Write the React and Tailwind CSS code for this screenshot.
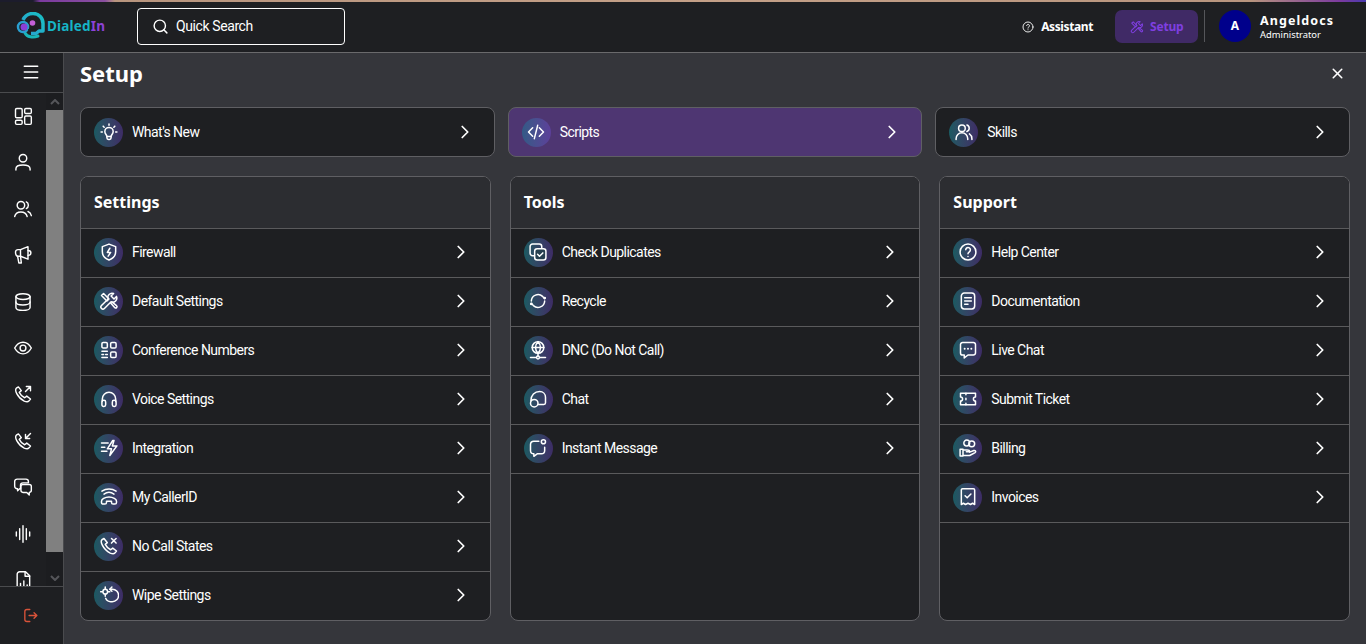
import React from "react";
import { ChevronRight, X, Search, Menu } from "lucide-react";

const Svg = ({ size = 20, sw = 1.8, color = "currentColor", children, className = "" }) => (
  <svg width={size} height={size} viewBox="0 0 24 24" fill="none" stroke={color} strokeWidth={sw} strokeLinecap="round" strokeLinejoin="round" className={className}>
    {children}
  </svg>
);

const P = {
  bulb: <><path d="M9.500 17.500h5v1.500a2 2 0 0 1-2 2h-1a2 2 0 0 1-2-2v-1.500Z"/><path d="M9.500 17.500c0-2.200-2.500-3-2.500-6a5 5 0 0 1 10 0c0 3-2.500 3.800-2.500 6"/><path d="M12 2.500v1.500M5 5l1.200 1.200M19 5l-1.200 1.200M2.500 12H4M20 12h1.500"/></>,
  code: <><path d="m8 7-5 5 5 5M16 7l5 5-5 5M14 4l-4 16"/></>,
  users: <><circle cx="9.500" cy="7.500" r="4"/><path d="M2.500 21v-1a7 7 0 0 1 14 0v1"/><path d="M15.500 3.700a4 4 0 0 1 0 7.600M18.500 14.200a7 7 0 0 1 3 5.800v1"/></>,
  shield: <><path d="M12 2.500 20 5.500v6c0 5-3.400 8.400-8 10-4.600-1.600-8-5-8-10v-6l8-3Z"/><path d="m13 7.500-3 5h4l-3 4.500"/></>,
  tools: <><path d="M3 5.500 5.500 3 12 9.500 9.500 12 3 5.500Z"/><path d="M21 6.500a5 5 0 0 1-6.500 6.500L6.500 21a2.100 2.100 0 0 1-3.500-3.500L11 9.500A5 5 0 0 1 17.500 3L14.500 6l3.500 3.500 3-3Z"/><path d="m14 14.500 5 5.500a1.500 1.500 0 0 0 2-2.500L15.500 13"/></>,
  qr: <><rect x="3.500" y="3" width="6.500" height="6.500" rx="1.500"/><rect x="14" y="3" width="6.500" height="6.500" rx="1.500"/><rect x="14" y="14.500" width="6.500" height="6.500" rx="1.500"/><path d="M3.500 13.500h6.500M3.500 17.500h2M8 17.500h2M3.500 21h6.500"/></>,
  head: <><path d="M4 15v-3a8 8 0 0 1 16 0v3"/><rect x="3.500" y="13.500" width="4.500" height="7.500" rx="2"/><rect x="16" y="13.500" width="4.500" height="7.500" rx="2"/></>,
  integ: <><path d="M16.500 3 10 13h5l-2 8 8.500-11.500h-5.500L18 3h-1.500Z"/><path d="M3 6h8M3 11h4M3 16h6.500"/></>,
  caller: <><path d="M3 18.500v-1.500c0-2 4-5 9-5s9 3 9 5v1.500a2 2 0 0 1-2 2h-2a2 2 0 0 1-2-2v-1.500H9v1.500a2 2 0 0 1-2 2H5a2 2 0 0 1-2-2Z"/><path d="M6 8.500c3.500-2.500 8.500-2.500 12 0M3.500 5C8.500 1.500 15.500 1.500 20.500 5"/></>,
  nocall: <><path d="M6 3 3.500 4.500C2.500 5.500 2.500 8 4 11c2 4 5.500 7.500 9.500 9.500 2.500 1 4.500 1 5.500 0l2-2.500-4.500-3.500-2.500 2c-2.500-1-5-3.500-6.500-6.500L10 8 6 3Z"/><path d="m15 3 5.500 5.500M20.500 3 15 8.500"/></>,
  wipe: <><circle cx="7.500" cy="8" r="2.800"/><path d="M7.500 2.500v2M7.500 11.500v2M2 8h2M11 8h2"/><path d="M15.500 2.500 13 5l2.500 2.500"/><path d="M13 5h3a6.500 6.500 0 0 1 0 15h-2c-3 0-5-1.500-6-4"/></>,
  dup: <><rect x="2.500" y="2.500" width="14" height="14" rx="3"/><rect x="8" y="8" width="13.500" height="13.500" rx="3" fill="#27404f"/><path d="m11.500 14.800 2.300 2.300 4-4"/></>,
  recycle: <><path d="M4 12a8 8 0 0 1 13.500-5.500L20 9"/><path d="M20 12a8 8 0 0 1-13.500 5.500L4 15"/><circle cx="20" cy="8.500" r=".8"/><circle cx="4" cy="15.500" r=".8"/></>,
  dnc: <><circle cx="12" cy="9" r="7"/><path d="M5 9h14M12 2c2 2 3 4.500 3 7s-1 5-3 7c-2-2-3-4.500-3-7s1-5 3-7Z"/><path d="M12 16v3M3 21h7M14 21h7"/><circle cx="12" cy="21" r="1.700"/></>,
  chat: <><path d="M3.500 14C3.500 7.500 8 3 14 3c4 0 7 3 7 7v6.500a2 2 0 0 1-2 2h-7"/><circle cx="7.500" cy="17" r="4.500"/></>,
  im: <><path d="M13 4H7a4 4 0 0 0-4 4v7a4 4 0 0 0 4 4h0v3l4-3h5a4 4 0 0 0 4-4v-4"/><circle cx="18.500" cy="4.500" r="2.500"/></>,
  help: <><circle cx="12" cy="12" r="9.500"/><path d="M9.300 9.200a2.800 2.800 0 1 1 4.300 2.600c-1 .7-1.600 1.200-1.600 2.400"/><path d="M12 17.300v.1"/></>,
  doc: <><rect x="4" y="2.500" width="16" height="19" rx="3.500"/><path d="M8 8h8M8 12h8M8 16h4"/></>,
  live: <><path d="M5.500 3h13A2.500 2.500 0 0 1 21 5.500v10a2.500 2.500 0 0 1-2.500 2.500H12l-4.500 3.500V18h-2A2.500 2.500 0 0 1 3 15.500v-10A2.500 2.500 0 0 1 5.500 3Z"/><path d="M8 10.500v.1M12 10.500v.1M16 10.500v.1" strokeWidth="2.400"/></>,
  ticket: <><path d="M3 5h18v4.500a2.500 2.500 0 0 0 0 5V19H3v-4.500a2.500 2.500 0 0 0 0-5V5Z"/><path d="M9.500 5v2M9.500 11v2M9.500 17v2"/></>,
  billing: <><circle cx="10.500" cy="6" r="3.500"/><circle cx="16.500" cy="7" r="3.500"/><path d="M2.500 13.500H6v8H2.500zM6 14.500h5c2 0 3 1 3 2h-4M14 17l5-2c2-.5 3 1.500 1.500 2.500L14 21H6"/></>,
  invoice: <><path d="M4 3.500A1.500 1.500 0 0 1 5.500 2h13A1.500 1.500 0 0 1 20 3.500V21l-2.500-1.500L15 21l-3-1.500L9 21l-2.500-1.500L4 21V3.500Z"/><path d="m8.500 10.500 2.500 2.500 4.500-4.500"/></>,
  dash: <><rect x="3" y="3" width="8" height="11" rx="1.500"/><rect x="14" y="3" width="8" height="6" rx="1.500"/><rect x="3" y="17" width="8" height="5" rx="1.500"/><rect x="14" y="12" width="8" height="10" rx="1.500"/></>,
  user: <><circle cx="12" cy="7.500" r="4.500"/><path d="M3.500 21.500v-1.500c0-3 3-4.500 8.500-4.500s8.500 1.500 8.500 4.500v1.500"/></>,
  team: <><circle cx="9.500" cy="7.500" r="4.500"/><path d="M2 21c.8-3.500 3.800-5.500 7.500-5.500S16 17.500 17 21"/><path d="M16 3.500a4.500 4.500 0 0 1 0 8M18 15c2 .8 3.500 2.800 4 5"/></>,
  mega: <><path d="M3 8.500C3 6.500 4.500 5.500 6 5.500h3l9-3.500v15l-9-3.500H6c-2 0-3-2-3-5Z"/><path d="M9 5.500v8M5.500 13.500 7 21.500h3l-1-8"/><path d="M18 6.500c2 0 3.500 1 3.500 3s-1.500 3-3.500 3"/></>,
  db: <><ellipse cx="12" cy="5.500" rx="8.500" ry="3.500"/><path d="M3.500 5.500v13c0 2 3.800 3.500 8.500 3.500s8.500-1.500 8.500-3.500v-13"/><path d="M3.500 12c0 2 3.800 3.500 8.500 3.500s8.500-1.500 8.500-3.500"/></>,
  eye: <><path d="M2 12c2.500-4.500 6-7 10-7s7.500 2.500 10 7c-2.500 4.500-6 7-10 7s-7.500-2.500-10-7Z"/><circle cx="12" cy="12" r="3.500"/></>,
  out: <><path d="M6.500 3.500 4 5c-1 1-1 3.500.5 6.500 2 4 5 7 9 9 2.500 1 4.500 1 5.500 0l2-2.500-4.500-3.500-2.500 2c-2.500-1-5-3.500-6.500-6.500L10 8 6.500 3.500Z"/><path d="M15 9l6-6M16 3h5v5"/></>,
  inc: <><path d="M6.500 3.500 4 5c-1 1-1 3.500.5 6.500 2 4 5 7 9 9 2.500 1 4.500 1 5.500 0l2-2.500-4.500-3.500-2.500 2c-2.500-1-5-3.500-6.500-6.500L10 8 6.500 3.500Z"/><path d="M21 3l-6 6M15 4v5h5"/></>,
  msgs: <><path d="M5 2.500h10.500a3 3 0 0 1 3 3V7H12a3 3 0 0 0-3 3v4H8l-2.500 2.500V14H5a3 3 0 0 1-3-3V5.500a3 3 0 0 1 3-3Z"/><path d="M12 9h7.500a2.500 2.500 0 0 1 2.500 2.500V16a2.500 2.500 0 0 1-2.500 2.500V21.500L16.500 18.500H12A2.500 2.500 0 0 1 9.500 16v-4.500A2.500 2.500 0 0 1 12 9Z"/></>,
  wave: <><path d="M12 2v20M8 5.500v13M16 5.500v13M4 9.500v5M20 9.500v5"/></>,
  report: <><path d="M5 22V5a3 3 0 0 1 3-3h7l5 5v15"/><path d="M14.500 2.500V7.500h5.500"/><path d="M9 22v-6M13 22v-9M17 22v-4"/></>,
  logout: <><path d="M11 3.500H7a3 3 0 0 0-3 3v11a3 3 0 0 0 3 3h4"/><path d="M10 12h11M17 8l4 4-4 4"/></>,
  helpSm: <><circle cx="12" cy="12" r="10"/><path d="M9.300 9.200a2.800 2.800 0 1 1 4.300 2.600c-1 .7-1.600 1.200-1.600 2.400"/><path d="M12 17.500v.1"/></>,
  setupTool: <><path d="M3 5.500 5.500 3 12 9.500 9.500 12 3 5.500Z"/><path d="M21 6.500a5 5 0 0 1-6.500 6.500L6.500 21a2.100 2.100 0 0 1-3.500-3.500L11 9.500A5 5 0 0 1 17.500 3L14.500 6l3.500 3.500 3-3Z"/><path d="m14 14.500 5 5.500a1.500 1.500 0 0 0 2-2.500L15.500 13"/></>,
};

const Badge = ({ icon, active }) => (
  <span className={active
    ? "flex h-[29px] w-[29px] shrink-0 items-center justify-center rounded-full bg-gradient-to-r from-[#315a86] to-[#5c3f9a] text-white"
    : "flex h-[29px] w-[29px] shrink-0 items-center justify-center rounded-full bg-gradient-to-r from-[#1a5a62] to-[#3d2c66] text-white"}>
    <Svg size={20} sw={1.8}>{P[icon]}</Svg>
  </span>
);

const TopCard = ({ icon, label, active }) => (
  <div className={active
    ? "flex h-[50px] items-center rounded-lg border border-[#5f5f63] bg-[#4e3672] pl-[13px] pr-[18px]"
    : "flex h-[50px] items-center rounded-lg border border-[#5f5f63] bg-[#1e1f22] pl-[13px] pr-[18px]"}>
    <Badge icon={icon} active={active} />
    <span className="ml-[9px] flex-1 text-sm tracking-[-0.55px] text-white">{label}</span>
    <ChevronRight size={22} strokeWidth={1.9} className="text-white" />
  </div>
);

const Row = ({ icon, label }) => (
  <div className="flex h-[49px] shrink-0 items-center border-b border-[#5a5a5c] pb-[2px] pl-[13px] pr-[18px]">
    <Badge icon={icon} />
    <span className="ml-[9px] flex-1 text-sm tracking-[-0.55px] text-white">{label}</span>
    <ChevronRight size={22} strokeWidth={1.9} className="text-white" />
  </div>
);

const Panel = ({ title, rows }) => (
  <section className="flex h-[445px] flex-col overflow-hidden rounded-lg border border-[#5f5f63] bg-[#1e1f22]">
    <h2 className="flex h-[52px] shrink-0 items-center border-b border-[#5a5a5c] bg-[#2c2d31] pb-[2px] pl-[13px] font-['Noto_Sans',sans-serif] text-[16px] font-bold text-white">{title}</h2>
    {rows.map(([i, l]) => <Row key={l} icon={i} label={l} />)}
  </section>
);

const rail = ["dash", "user", "team", "mega", "db", "eye", "out", "inc", "msgs", "wave", "report"];

const settings = [["shield", "Firewall"], ["tools", "Default Settings"], ["qr", "Conference Numbers"], ["head", "Voice Settings"], ["integ", "Integration"], ["caller", "My CallerID"], ["nocall", "No Call States"], ["wipe", "Wipe Settings"]];
const tools = [["dup", "Check Duplicates"], ["recycle", "Recycle"], ["dnc", "DNC (Do Not Call)"], ["chat", "Chat"], ["im", "Instant Message"]];
const support = [["help", "Help Center"], ["doc", "Documentation"], ["live", "Live Chat"], ["ticket", "Submit Ticket"], ["billing", "Billing"], ["invoice", "Invoices"]];

const Logo = () => (
  <svg width="30" height="28" viewBox="0 0 30 28" fill="none" className="shrink-0">
    <defs>
      <linearGradient id="lg" x1="0" y1="1" x2="1" y2="0">
        <stop offset="0" stopColor="#2a9fd0" />
        <stop offset="1" stopColor="#19c0c4" />
      </linearGradient>
    </defs>
    <path d="M7 8C9 3.500 13 1.500 17 1.500c6 0 10 4.500 10 10v7.500h-4l-3 2.500h-5" stroke="url(#lg)" strokeWidth="3.500" strokeLinejoin="round" />
    <path d="M9 21c2 4 8 5 13 3" stroke="#18b6b8" strokeWidth="3" strokeLinecap="round" />
    <circle cx="7" cy="15" r="5" fill="#1e1f22" stroke="#2a9fd0" strokeWidth="2.500" />
    <circle cx="8" cy="15" r="3.500" fill="#8b3fd6" />
    <circle cx="16.500" cy="11" r="2.800" fill="#c560d8" />
    <path d="M12 18c2-2.500 6-2.500 8 0" stroke="#1e1f22" strokeWidth="1" />
  </svg>
);

export default function App() {
  return (
    <div className="flex h-screen w-full flex-col overflow-hidden bg-[#35363b] font-['Roboto',sans-serif] text-white">
      <div className="h-[2px] shrink-0 bg-[linear-gradient(90deg,#1c1c2c_0,#1c1c2c_33px,#7b3a9f_40px,#8a4fa0_105px,#b8957e_115px,#c4a088_700px,#b8957e_1250px,#7b3a9f_1340px,#4a3ab0_1366px)]" />
      <header className="flex h-[51px] shrink-0 items-center border-b border-[#6a6a6c] bg-[#1e1f22] pb-[2px]">
        <div className="ml-[16px] flex w-[121px] items-center">
          <Logo />
          <span className="ml-[1px] font-['Noto_Sans',sans-serif] text-[13.500px] font-bold tracking-[0.2px] text-[#16b3c6]">Dialed<span className="text-[#8d42d8]">In</span></span>
        </div>
        <div className="flex h-[37px] w-[208px] items-center rounded-[4px] border border-white pl-[14px]">
          <Search size={17} strokeWidth={2} />
          <span className="ml-[7px] text-sm tracking-[-0.4px]">Quick Search</span>
        </div>
        <div className="ml-auto flex items-center">
          <Svg size={12} sw={1.8} className="mt-[2px]">{P.helpSm}</Svg>
          <span className="ml-[7px] pt-[2px] font-['Noto_Sans',sans-serif] text-[12px] font-bold tracking-[-0.4px]">Assistant</span>
          <div className="ml-[22px] flex h-[33px] w-[83px] items-center rounded-[7px] bg-[#402a66] pl-[15px] pt-[2px] text-[#7f3fe0]">
            <Svg size={14} sw={1.8}>{P.setupTool}</Svg>
            <span className="ml-[6px] font-['Noto_Sans',sans-serif] text-[12px] font-bold tracking-[-0.2px]">Setup</span>
          </div>
          <div className="ml-[6px] h-[32px] w-px bg-[#55565a]" />
          <div className="ml-[14px] flex h-[32px] w-[32px] items-center justify-center rounded-full bg-[#00008b] font-['Noto_Sans',sans-serif] text-[12px] font-bold">A</div>
          <div className="ml-[9px] mr-[31px] w-[75px] pt-[2px]">
            <div className="font-['Noto_Sans',sans-serif] text-[12.500px] font-bold leading-[16px] tracking-[1.100px]">Angeldocs</div>
            <div className="font-['Noto_Sans',sans-serif] text-[9.400px] leading-[12px]">Administrator</div>
          </div>
        </div>
      </header>

      <div className="flex min-h-0 flex-1">
        <aside className="flex w-[64px] shrink-0 flex-col border-r border-[#4a4b4e] bg-[#1e1f22]">
          <div className="flex h-[40px] shrink-0 items-center justify-center border-b border-[#4a4b4e] pb-[2px] pr-[1px]">
            <Menu size={20} strokeWidth={1.8} />
          </div>
          <div className="flex min-h-0 flex-1">
            <div className="flex-1 overflow-hidden">
              <div className="flex flex-col items-center pt-[12px]">
                {rail.map((r) => (
                  <span key={r} className="flex h-[46.400px] shrink-0 items-start justify-center pt-px">
                    <Svg size={20} sw={1.7}>{P[r]}</Svg>
                  </span>
                ))}
              </div>
            </div>
            <div className="flex w-[17px] shrink-0 flex-col bg-[#808080]">
              <div className="flex h-[17px] items-center justify-center bg-[#1c1d20]">
                <svg width="10" height="6" viewBox="0 0 10 6"><path d="M1 5l4-4 4 4" fill="none" stroke="#55565a" strokeWidth="2" /></svg>
              </div>
              <div className="flex-1" />
              <div className="flex h-[34px] items-end justify-center bg-[#1c1d20] pb-[5px]">
                <svg width="10" height="6" viewBox="0 0 10 6"><path d="M1 1l4 4 4-4" fill="none" stroke="#55565a" strokeWidth="2" /></svg>
              </div>
            </div>
          </div>
          <div className="flex h-[58px] shrink-0 items-center justify-center border-t border-[#4a4b4e] pr-[3px] text-[#d9533a]">
            <Svg size={17} sw={1.9}>{P.logout}</Svg>
          </div>
        </aside>

        <main className="min-w-0 flex-1 px-[16px]">
          <div className="flex h-[54px] items-center justify-between pb-[13px]">
            <h1 className="font-['Noto_Sans',sans-serif] text-[22px] font-bold text-white">Setup</h1>
            <X size={17} strokeWidth={2.200} className="mr-[4px]" />
          </div>
          <div className="grid grid-cols-3 gap-[13px]">
            <TopCard icon="bulb" label="What's New" />
            <TopCard icon="code" label="Scripts" active />
            <TopCard icon="users" label="Skills" />
          </div>
          <div className="mt-[19px] grid grid-cols-3 gap-[19px]">
            <Panel title="Settings" rows={settings} />
            <Panel title="Tools" rows={tools} />
            <Panel title="Support" rows={support} />
          </div>
        </main>
      </div>
    </div>
  );
}
